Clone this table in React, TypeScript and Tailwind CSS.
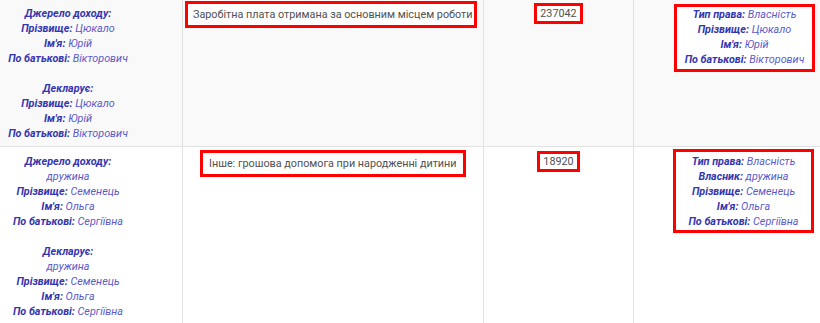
import React from "react";

type Line = { label?: string; value?: string } | null;

function Lines({ lines }: { lines: Line[] }) {
  return (
    <div className="flex flex-col items-center leading-[15px]">
      {lines.map((l, i) =>
        l === null ? (
          <div key={i} className="h-[15px]" />
        ) : (
          <div key={i} className="whitespace-nowrap">
            {l.label && <span className="font-bold italic text-[#3535b0]">{l.label}</span>}
            {l.label && l.value ? " " : null}
            {l.value && <span className="italic text-[#5a5acc]">{l.value}</span>}
          </div>
        )
      )}
    </div>
  );
}

const row1Left: Line[] = [
  { label: "Джерело доходу:" },
  { label: "Прізвище:", value: "Цюкало" },
  { label: "Ім'я:", value: "Юрій" },
  { label: "По батькові:", value: "Вікторович" },
  null,
  { label: "Декларує:" },
  { label: "Прізвище:", value: "Цюкало" },
  { label: "Ім'я:", value: "Юрій" },
  { label: "По батькові:", value: "Вікторович" },
];

const row1Right: Line[] = [
  { label: "Тип права:", value: "Власність" },
  { label: "Прізвище:", value: "Цюкало" },
  { label: "Ім'я:", value: "Юрій" },
  { label: "По батькові:", value: "Вікторович" },
];

const row2Left: Line[] = [
  { label: "Джерело доходу:" },
  { value: "дружина" },
  { label: "Прізвище:", value: "Семенець" },
  { label: "Ім'я:", value: "Ольга" },
  { label: "По батькові:", value: "Сергіївна" },
  null,
  { label: "Декларує:" },
  { value: "дружина" },
  { label: "Прізвище:", value: "Семенець" },
  { label: "Ім'я:", value: "Ольга" },
  { label: "По батькові:", value: "Сергіївна" },
];

const row2Right: Line[] = [
  { label: "Тип права:", value: "Власність" },
  { label: "Власник:", value: "дружина" },
  { label: "Прізвище:", value: "Семенець" },
  { label: "Ім'я:", value: "Ольга" },
  { label: "По батькові:", value: "Сергіївна" },
];

export default function App() {
  return (
    <div className="w-[820px] h-[323px] overflow-hidden bg-white font-[Roboto,sans-serif] text-[10.8px]">
      <div className="-mt-[1px] grid grid-cols-[183px_301px_150px_219px]">
        {/* Row 1 */}
        <div className="bg-[#f9f9f9] border-r border-b border-[#e2e2e2] pt-[7px] pb-[5px] pr-[46px]">
          <Lines lines={row1Left} />
        </div>
        <div className="bg-[#f9f9f9] border-r border-b border-[#e2e2e2] pt-[2px] pl-[2px] flex items-start">
          <div className="border-[3px] border-[#ff0000] bg-white pl-[5px] pr-[2px] py-[3px] leading-[15px] text-[#505050] whitespace-nowrap">
            Заробітна плата отримана за основним місцем роботи
          </div>
        </div>
        <div className="bg-[#f9f9f9] border-r border-b border-[#e2e2e2] pt-[4px] flex justify-center items-start">
          <div className="border-[3px] border-[#ff0000] bg-white px-[3px] leading-[15px] text-[#505050]">237042</div>
        </div>
        <div className="bg-[#f9f9f9] border-b border-[#e2e2e2] pt-[5px] pl-[40px] flex items-start">
          <div className="w-[141px] border-[3px] border-[#ff0000] bg-white pb-[2px]">
            <Lines lines={row1Right} />
          </div>
        </div>

        {/* Row 2 */}
        <div className="bg-white border-r border-[#e2e2e2] pt-[7px] pb-[5px] pr-[46px]">
          <Lines lines={row2Left} />
        </div>
        <div className="bg-white border-r border-[#e2e2e2] pt-[3px] pl-[17px] flex items-start">
          <div className="border-[3px] border-[#ff0000] bg-white px-[6px] py-[3px] leading-[15px] text-[#505050] whitespace-nowrap">
            Інше: грошова допомога при народженні дитини
          </div>
        </div>
        <div className="bg-white border-r border-[#e2e2e2] pt-[4px] flex justify-center items-start">
          <div className="border-[3px] border-[#ff0000] bg-white px-[3px] leading-[15px] text-[#505050]">18920</div>
        </div>
        <div className="bg-white pt-[2px] pl-[39px] flex items-start">
          <div className="w-[141px] border-[3px] border-[#ff0000] bg-white pt-[2px] pb-[1px]">
            <Lines lines={row2Right} />
          </div>
        </div>
      </div>
    </div>
  );
}
